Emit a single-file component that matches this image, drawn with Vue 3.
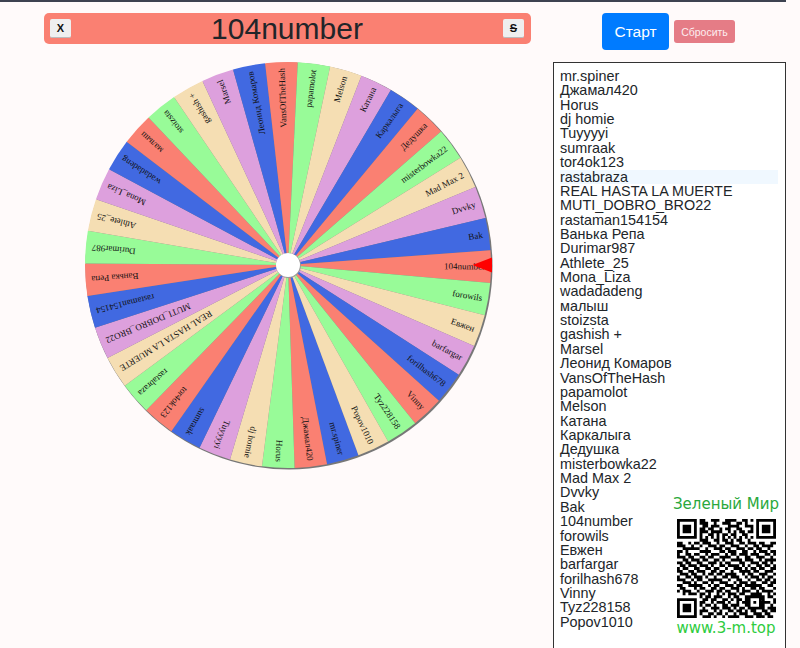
<script setup>
const names = ['mr.spiner','Джамал420','Horus','dj homie','Tuyyyyi','sumraak','tor4ok123','rastabraza','REAL HASTA LA MUERTE','MUTI_DOBRO_BRO22','rastaman154154','Ванька Репа','Durimar987','Athlete_25','Mona_Liza','wadadadeng','малыш','stoizsta','gashish +','Marsel','Леонид Комаров','VansOfTheHash','papamolot','Melson','Катана','Каркалыга','Дедушка','misterbowka22','Mad Max 2','Dvvky','Bak','104number','forowils','Евжен','barfargar','forilhash678','Vinny','Tyz228158','Popov1010']
const palette = ['#4169e1','#fa8072','#98fb98','#f5deb3','#dda0dd']
const R = 203
const step = 360 / names.length
const offset = 0.45 - 31 * step
const pt = (a, r) => {
  const t = (a * Math.PI) / 180
  return `${(r * Math.cos(t)).toFixed(2)} ${(r * Math.sin(t)).toFixed(2)}`
}
const wedges = names.map((name, i) => {
  const mid = offset + i * step
  return {
    name,
    fill: palette[i % 5],
    d: `M0 0L${pt(mid - step / 2, R)}A${R} ${R} 0 0 1 ${pt(mid + step / 2, R)}Z`,
    rot: `rotate(${mid.toFixed(3)})`
  }
})
const qrRows = [
'11111110110011100111100110101111111',
'10000010111001001110011010001000001',
'10111010011011100011110011101011101',
'10111010110110010110011000101011101',
'10111010111011110010101101101011101',
'10000010100110101101100110001000001',
'11111110101010101010101010101111111',
'00000000111001101101011001000000000',
'11001011011100100111001101110110011',
'11100100100111011001110010011011110',
'00111111001001110110011101101100100',
'11010000111100011011100110010111011',
'10011011001011100101101110111001101',
'11101100110110011110010011001110010',
'00110111011001101001111011100101111',
'11011001100111010110001100111011010',
'01101110111010011011110101001101101',
'10110011001101100100111010110110011',
'11001101110011011001001111011001110',
'01110110010110110111100101100111001',
'10011011101001001101110010111010110',
'11100101100111110010011001001101101',
'00111010011010011100101110110011011',
'11001111100101100111011011111100110',
'01100010110011011001110100110110001',
'10111001001110110110010111001011110',
'00101110110100101011101100111100101',
'00000000101101110010110011111110110',
'11111110011011001101011011000110001',
'10000010110010111010010111010111101',
'10111010101101001101110011000110010',
'10111010010011101110101101111110111',
'10111010111001010011011010110011011',
'10000010100110110100101110011101100',
'11111110011101001011110011101110110'
]
let qrPath = ''
qrRows.forEach((row, y) => {
  for (let x = 0; x < row.length; x++) if (row[x] === '1') qrPath += `M${x} ${y}h1v1h-1z`
})
</script>

<template>
  <div class="page">
    <div class="topline"></div>
    <div class="layout">
      <section class="left">
        <div class="banner">
          <button class="tiny">X</button>
          <h1 class="winner">104number</h1>
          <button class="tiny"><s>S</s></button>
        </div>
        <div class="wheel-wrap">
          <svg class="wheel" width="420" height="420" viewBox="-210 -210 420 420">
            <circle cx="1" cy="1" r="203.5" fill="#777" />
            <g v-for="w in wedges" :key="w.name">
              <path :d="w.d" :fill="w.fill" />
            </g>
            <g v-for="w in wedges" :key="w.name + 't'" :transform="w.rot">
              <text x="197" y="3" text-anchor="end" class="label">{{ w.name }}</text>
            </g>
            <circle r="12.5" fill="#999" cx="0.4" cy="0.4" />
            <circle r="12" fill="#fff" />
            <polygon points="184.5,0 204,-7.5 204,7.5" fill="#f00" />
          </svg>
        </div>
      </section>
      <aside class="right">
        <div class="actions">
          <button class="start">Старт</button>
          <button class="reset">Сбросить</button>
        </div>
        <div class="list">
          <div v-for="n in names" :key="n" class="row" :class="{ hot: n === 'rastabraza' }">{{ n }}</div>
          <div class="promo">
            <div class="promo-title">Зеленый Мир</div>
            <svg class="qr" width="99" height="99" viewBox="0 0 35 35" shape-rendering="geometricPrecision">
              <path :d="qrPath" fill="#000" />
            </svg>
            <div class="promo-url">www.3-m.top</div>
          </div>
        </div>
      </aside>
    </div>
  </div>
</template>

<style>
html, body { margin: 0; background: #fffafa; overflow: hidden; height: 648px; }
</style>

<style scoped>
.page { width: 786px; height: 648px; overflow: hidden; font-family: "Liberation Sans", Arial, sans-serif; color: #212529; }
.topline { height: 2px; background: #3d4250; }
.layout { display: flex; padding-top: 11px; }
.left { width: 553px; flex: none; display: flex; flex-direction: column; align-items: flex-start; }
.banner { margin-left: 44px; width: 487px; height: 31px; box-sizing: border-box; padding: 0 7px 0 6px; background: #fa8072; border-radius: 5px; display: flex; align-items: center; justify-content: space-between; }
.winner { margin: 0; font-size: 30px; font-weight: 400; line-height: 31px; }
.tiny { width: 21px; height: 19px; padding: 0; box-sizing: border-box; border: 0; border-bottom: 1px solid #bbb; border-radius: 2px; background: #efefef; color: #111; font: 700 11px "Liberation Sans", sans-serif; }
.wheel-wrap { margin: 11px 0 0 78px; line-height: 0; }
.wheel { display: block; }
.label { font-family: "Liberation Serif", "Noto Sans CJK SC", serif; font-size: 9px; fill: #111; }
.right { flex: none; width: 233px; display: flex; flex-direction: column; }
.actions { display: flex; align-items: center; height: 37px; padding-left: 49px; gap: 5px; margin-bottom: 12px; }
.start { width: 67px; height: 37px; padding: 0; border: 0; border-radius: 4px; background: #007bff; color: #fff; font: 400 15.5px "Liberation Sans", sans-serif; }
.reset { width: 61px; height: 23px; padding: 0; border: 0; border-radius: 3px; background: #e57c86; color: #fdeef0; font: 400 10.5px "Liberation Sans", sans-serif; }
.list { position: relative; box-sizing: border-box; height: 640px; padding: 6px 7px 0 6px; border: 1px solid #333; background: #fff; font-size: 14.4px; line-height: 14.37px; }
.row { height: 14.37px; white-space: nowrap; }
.hot { background: #f0f8ff; }
.promo { position: absolute; left: 118px; top: 431px; width: 108px; display: flex; flex-direction: column; align-items: center; }
.promo-title { font-family: "DejaVu Sans", sans-serif; font-size: 15px; line-height: 20px; color: #2aa83c; white-space: nowrap; }
.qr { display: block; margin-top: 5px; }
.promo-url { font-family: "DejaVu Sans", sans-serif; font-size: 15px; line-height: 17px; margin-top: 2px; color: #2ecc40; white-space: nowrap; }
</style>
